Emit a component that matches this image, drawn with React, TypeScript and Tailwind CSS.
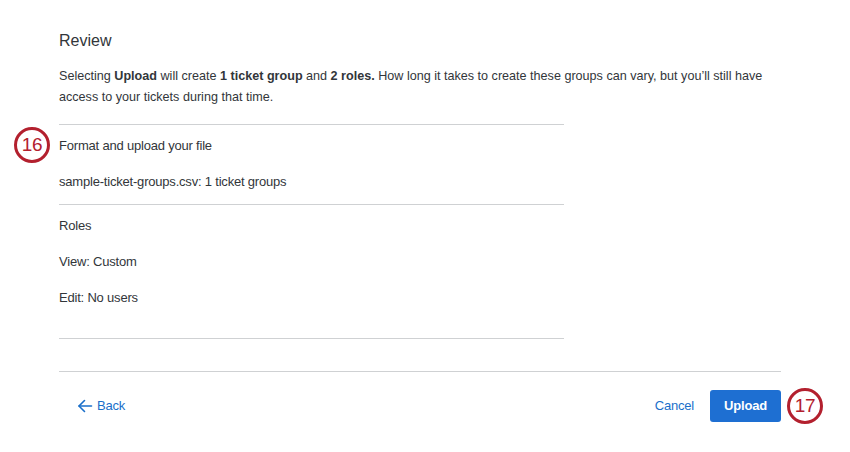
import React from "react";

const Step: React.FC<{ n: number; className: string }> = ({ n, className }) => (
  <div
    className={
      "absolute flex h-[36px] w-[36px] items-center justify-center rounded-full border-[3px] border-[#b3202e] bg-white text-[19px] text-[#b3202e] " +
      className
    }
  >
    {n}
  </div>
);

export default function App() {
  return (
    <div className="relative h-[452px] w-[850px] bg-white font-['Liberation_Sans',Arial,sans-serif] text-[13px] tracking-[-0.2px] text-[#32363a]">
      <Step n={16} className="left-[14px] top-[127px]" />
      <Step n={17} className="left-[787px] top-[388px]" />

      <div className="flex w-[781px] flex-col pl-[59px] pt-[30px]">
        <h2 className="text-[16px] leading-[22px] tracking-normal">Review</h2>

        <p className="mt-[14px] w-[720px] text-[12.6px] leading-[21px] tracking-normal">
          Selecting <b>Upload</b> will create <b>1 ticket group</b> and <b>2 roles.</b> How long it
          takes to create these groups can vary, but you’ll still have access to your tickets
          during that time.
        </p>

        <div className="mt-[16px] w-[505px] border-t border-[#cfd1d3]">
          <div className="pt-[3px] pb-[4px]">
            <div className="flex h-[36px] items-center">Format and upload your file</div>
            <div className="flex h-[36px] items-center">sample-ticket-groups.csv: 1 ticket groups</div>
          </div>
          <div className="border-t border-[#cfd1d3] pt-[3px] pb-[22px]">
            <div className="flex h-[36px] items-center">Roles</div>
            <div className="flex h-[36px] items-center">View: Custom</div>
            <div className="flex h-[36px] items-center">Edit: No users</div>
          </div>
          <div className="border-t border-[#cfd1d3]" />
        </div>

        <div className="mt-[32px] flex items-center justify-between border-t border-[#cfd1d3] pt-[18px]">
          <button className="ml-[18px] flex items-center gap-[4px] text-[#1a6fca]">
            <svg width="16" height="16" viewBox="0 0 16 16" fill="none" stroke="currentColor" strokeWidth="1.6" strokeLinecap="round" strokeLinejoin="round">
              <path d="M14.5 8H2" />
              <path d="M7.5 2.5L2 8l5.5 5.5" />
            </svg>
            <span>Back</span>
          </button>
          <div className="flex items-center gap-[16px]">
            <button className="text-[#1a6fca]">Cancel</button>
            <button className="h-[32px] w-[71px] rounded-[3px] bg-[#1e6fd2] font-bold text-white">
              Upload
            </button>
          </div>
        </div>
      </div>
    </div>
  );
}
